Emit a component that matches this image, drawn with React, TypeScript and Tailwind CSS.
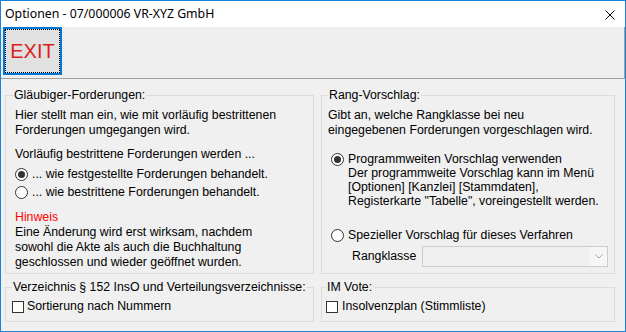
import React from 'react';

function Radio({ checked }: { checked?: boolean }) {
  return (
    <span className="flex h-[13px] w-[13px] shrink-0 items-center justify-center rounded-full border border-[#333333] bg-white">
      {checked && <span className="h-[7px] w-[7px] rounded-full bg-[#333333]" />}
    </span>
  );
}

function Checkbox() {
  return <span className="h-[12px] w-[12px] shrink-0 border border-[#333333] bg-white" />;
}

function Group({
  title,
  className,
  legendClass,
  children,
}: {
  title: string;
  className: string;
  legendClass?: string;
  children: React.ReactNode;
}) {
  return (
    <fieldset className={`border border-[#dcdcdc] ${className}`}>
      <legend className={`px-px leading-[14px] ${legendClass ?? ''}`}>{title}</legend>
      {children}
    </fieldset>
  );
}

export default function App() {
  return (
    <div
      className="flex h-[332px] w-[626px] flex-col overflow-hidden border border-[#1883d7] bg-[#f0f0f0] text-[12.3px] text-black"
      style={{ fontFamily: '"Liberation Sans", Arial, sans-serif' }}
    >
      {/* title bar */}
      <div className="flex h-[26px] shrink-0 items-center justify-between bg-white pl-[4px] pr-[10px]">
        <span className="text-[12.3px]" style={{ fontFamily: '"Noto Sans", sans-serif' }}>
          Optionen - 07/000006 VR-XYZ GmbH
        </span>
        <svg width="10" height="10" viewBox="0 0 10 10" className="mt-px">
          <path d="M0.5 0.5 L9.5 9.5 M9.5 0.5 L0.5 9.5" stroke="#000" strokeWidth="1" />
        </svg>
      </div>

      {/* toolbar */}
      <div className="flex h-[52px] shrink-0 items-start border-r border-b border-[#a0a0a0] bg-[#efefef] pl-[2px]">
        <button className="h-[48px] w-[59px] border-2 border-[#0078d7] bg-[#e1e1e1]">
          <span className="flex h-full w-full items-center justify-center border border-dotted border-black text-[20px] text-[#dc1f1d]">
            EXIT
          </span>
        </button>
      </div>

      {/* body */}
      <div className="flex flex-1 gap-[7px] pl-[4px] pt-[9px]">
        <div className="flex w-[309px] flex-col gap-[6px]">
          <Group title="Gläubiger-Forderungen:" className="h-[186px] pl-[9px] pt-[6px]" legendClass="ml-[-2px]">
            <p className="leading-[15px]">
              Hier stellt man ein, wie mit vorläufig bestrittenen
              <br />
              Forderungen umgegangen wird.
            </p>
            <p className="mt-[9px] leading-[15px]">Vorläufig bestrittene Forderungen werden ...</p>
            <div className="mt-[3px] flex flex-col">
              <label className="flex h-[18px] items-center gap-[4px]">
                <Radio checked />
                <span>... wie festgestellte Forderungen behandelt.</span>
              </label>
              <label className="flex h-[18px] items-center gap-[4px]">
                <Radio />
                <span>... wie bestrittene Forderungen behandelt.</span>
              </label>
            </div>
            <div className="mt-[9px] leading-[15px]">
              <p className="text-[#ff0000]">Hinweis</p>
              <p>
                Eine Änderung wird erst wirksam, nachdem
                <br />
                sowohl die Akte als auch die Buchhaltung
                <br />
                geschlossen und wieder geöffnet wurden.
              </p>
            </div>
          </Group>

          <Group title="Verzeichnis § 152 InsO und Verteilungsverzeichnisse:" className="h-[42px] pl-[6px] pt-[4px]">
            <label className="flex h-[17px] items-center gap-[3px]">
              <Checkbox />
              <span>Sortierung nach Nummern</span>
            </label>
          </Group>
        </div>

        <div className="flex w-[294px] flex-col gap-[6px]">
          <Group title="Rang-Vorschlag:" className="h-[186px] pl-[6px] pr-[6px] pt-[6px]">
            <p className="leading-[15px]">
              Gibt an, welche Rangklasse bei neu
              <br />
              eingegebenen Forderungen vorgeschlagen wird.
            </p>
            <label className="mt-[14px] flex items-start gap-[4px] pl-[3px] leading-[14px]">
              <span className="mt-px">
                <Radio checked />
              </span>
              <span>
                Programmweiten Vorschlag verwenden
                <br />
                Der programmweite Vorschlag kann im Menü
                <br />
                [Optionen] [Kanzlei] [Stammdaten],
                <br />
                Registerkarte "Tabelle", voreingestellt werden.
              </span>
            </label>
            <label className="mt-[20px] flex items-start gap-[4px] pl-[3px] leading-[14px]">
              <span className="mt-px">
                <Radio />
              </span>
              <span>Spezieller Vorschlag für dieses Verfahren</span>
            </label>
            <div className="mt-[4px] flex items-center pl-[24px]">
              <span className="w-[70px]">Rangklasse</span>
              <div className="flex h-[21px] w-[186px] items-center justify-end border border-[#cccccc] bg-[#f0f0f0]">
                <div className="flex h-full w-[17px] items-center justify-center bg-[#f6f6f6]">
                  <svg width="8" height="5" viewBox="0 0 8 5">
                    <path d="M0.5 0.5 L4 4 L7.5 0.5" fill="none" stroke="#a6a6a6" strokeWidth="1" />
                  </svg>
                </div>
              </div>
            </div>
          </Group>

          <Group title="IM Vote:" className="h-[42px] pl-[4px] pt-[4px]">
            <label className="flex h-[17px] items-center gap-[4px]">
              <Checkbox />
              <span>Insolvenzplan (Stimmliste)</span>
            </label>
          </Group>
        </div>
      </div>
    </div>
  );
}
